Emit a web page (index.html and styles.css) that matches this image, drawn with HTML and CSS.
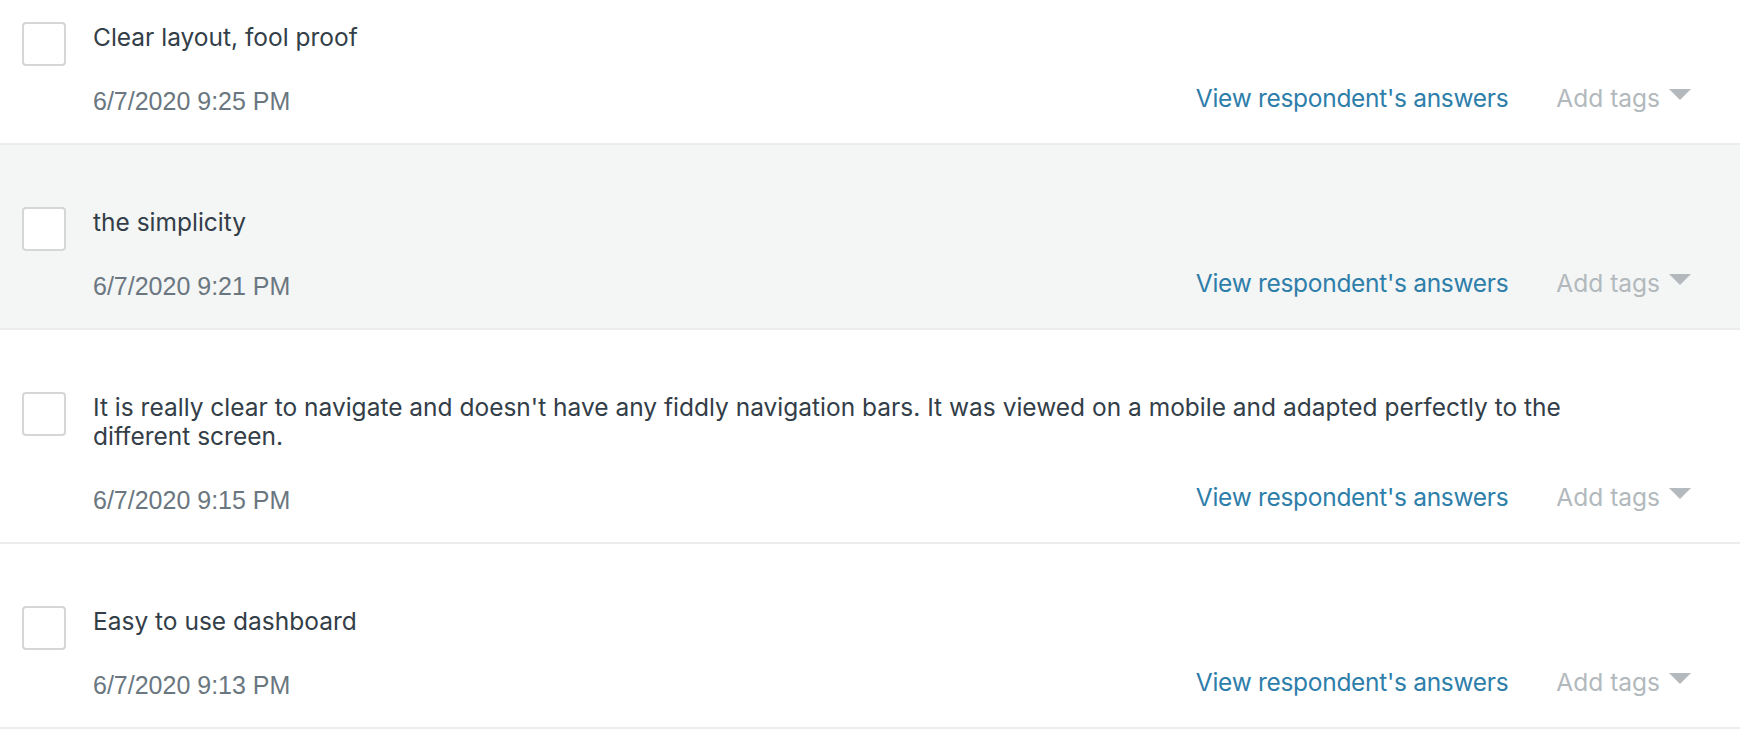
FILE: index.html
```html
<!DOCTYPE html>
<html lang="en">
<head>
<meta charset="utf-8">
<title>Responses</title>
<link rel="stylesheet" href="styles.css">
</head>
<body>
<div class="list">
  <div class="row">
    <span class="check"></span>
    <div class="content">
      <p class="answer">Clear layout, fool proof</p>
      <div class="footer">
        <span class="date">6/7/2020 9:25 PM</span>
        <div class="actions">
          <a class="view">View respondent's answers</a>
          <span class="tags">Add tags<span class="caret"></span></span>
        </div>
      </div>
    </div>
  </div>
  <div class="row row-hover">
    <span class="check"></span>
    <div class="content">
      <p class="answer">the simplicity</p>
      <div class="footer">
        <span class="date">6/7/2020 9:21 PM</span>
        <div class="actions">
          <a class="view">View respondent's answers</a>
          <span class="tags">Add tags<span class="caret"></span></span>
        </div>
      </div>
    </div>
  </div>
  <div class="row">
    <span class="check"></span>
    <div class="content">
      <p class="answer">It is really clear to navigate and doesn't have any fiddly navigation bars. It was viewed on a mobile and adapted perfectly to the different screen.</p>
      <div class="footer">
        <span class="date">6/7/2020 9:15 PM</span>
        <div class="actions">
          <a class="view">View respondent's answers</a>
          <span class="tags">Add tags<span class="caret"></span></span>
        </div>
      </div>
    </div>
  </div>
  <div class="row">
    <span class="check"></span>
    <div class="content">
      <p class="answer">Easy to use dashboard</p>
      <div class="footer">
        <span class="date">6/7/2020 9:13 PM</span>
        <div class="actions">
          <a class="view">View respondent's answers</a>
          <span class="tags">Add tags<span class="caret"></span></span>
        </div>
      </div>
    </div>
  </div>
</div>
</body>
</html>
```
FILE: styles.css
```css
html, body {
  margin: 0;
  padding: 0;
  background: #ffffff;
}
body {
  font-family: Inter, "Open Sans", sans-serif;
  color: #333e48;
  overflow: hidden;
}
.list {
  margin-top: -40px;
}
.row {
  display: flex;
  align-items: flex-start;
  padding: 62px 49px 27px 22px;
  border-bottom: 2px solid #ebeced;
  background: #ffffff;
}
.row-hover {
  background: #f4f5f5;
}
.check {
  flex: none;
  width: 44px;
  height: 44px;
  box-sizing: border-box;
  border: 2px solid #d6d6d6;
  border-radius: 4px;
  background: #ffffff;
}
.content {
  flex: 1;
  margin-left: 27px;
}
.answer {
  margin: 1px 0 0 0;
  max-width: 1520px;
  font-size: 24.5px;
  line-height: 29px;
  color: #333e48;
}
.footer {
  display: flex;
  justify-content: space-between;
  align-items: flex-start;
  margin-top: 34px;
}
.date {
  font-family: "Liberation Sans", Arial, sans-serif;
  font-size: 25px;
  line-height: 30px;
  color: #6b7780;
}
.actions {
  display: flex;
  align-items: center;
  gap: 48px;
  margin-top: -3px;
  font-size: 24.5px;
  line-height: 30px;
}
.view {
  color: #2e7eaa;
  letter-spacing: -0.3px;
  cursor: pointer;
}
.tags {
  display: inline-flex;
  align-items: center;
  color: #b2b9bd;
}
.caret {
  width: 0;
  height: 0;
  margin-left: 9px;
  margin-top: -7px;
  border-left: 11px solid transparent;
  border-right: 11px solid transparent;
  border-top: 11px solid #b3b9bd;
}
```
